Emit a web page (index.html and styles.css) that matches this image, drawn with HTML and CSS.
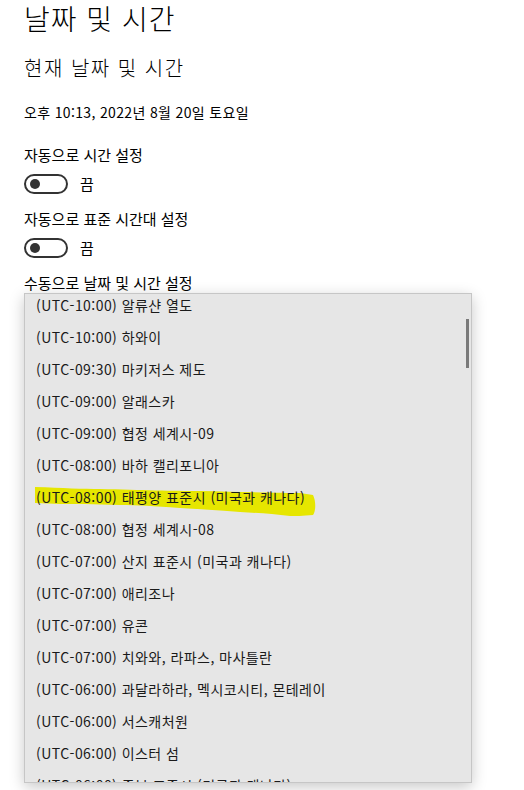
FILE: index.html
```html
<!DOCTYPE html>
<html lang="ko">
<head>
    <meta charset="UTF-8">
    <meta name="viewport" content="width=device-width, initial-scale=1.0">
    <title>날짜 및 시간</title>
    <link rel="stylesheet" href="styles.css">
</head>
<body>
    <main class="page">
        <h1>날짜 및 시간</h1>
        <h2>현재 날짜 및 시간</h2>
        <p class="now">오후 10:13, 2022년 8월 20일 토요일</p>

        <div class="setting">
            <div class="label">자동으로 시간 설정</div>
            <div class="switch-row">
                <span class="switch"><span class="knob"></span></span>
                <span>끔</span>
            </div>
        </div>

        <div class="setting">
            <div class="label">자동으로 표준 시간대 설정</div>
            <div class="switch-row">
                <span class="switch"><span class="knob"></span></span>
                <span>끔</span>
            </div>
        </div>

        <div class="setting">
            <div class="label">수동으로 날짜 및 시간 설정</div>
        </div>
    </main>

    <div class="dropdown">
        <ul class="zones">
            <li>(UTC-10:00) 알류샨 열도</li>
            <li>(UTC-10:00) 하와이</li>
            <li>(UTC-09:30) 마키저스 제도</li>
            <li>(UTC-09:00) 알래스카</li>
            <li>(UTC-09:00) 협정 세계시-09</li>
            <li>(UTC-08:00) 바하 캘리포니아</li>
            <li class="marked">
                <svg class="marker" width="290" height="36" viewBox="0 0 290 36">
                    <path d="M2 2 C30 3 50 4 67 4 C110 5 140 6 167 6 C210 7 250 8 267 8 L280 10 C283 16 283 26 280 30 C270 31 262 31 257 31 C240 29 225 28 207 27 C185 25 165 24 147 23 C120 21 105 20 87 20 C60 19 40 19 27 19 L2 18 Z" fill="#e6e600"/>
                </svg>
                <span>(UTC-08:00) 태평양 표준시 (미국과 캐나다)</span>
            </li>
            <li>(UTC-08:00) 협정 세계시-08</li>
            <li>(UTC-07:00) 산지 표준시 (미국과 캐나다)</li>
            <li>(UTC-07:00) 애리조나</li>
            <li>(UTC-07:00) 유콘</li>
            <li>(UTC-07:00) 치와와, 라파스, 마사틀란</li>
            <li>(UTC-06:00) 과달라하라, 멕시코시티, 몬테레이</li>
            <li>(UTC-06:00) 서스캐처원</li>
            <li>(UTC-06:00) 이스터 섬</li>
            <li>(UTC-06:00) 중부 표준시 (미국과 캐나다)</li>
        </ul>
        <div class="scrollbar"></div>
    </div>
</body>
</html>
```

FILE: styles.css
```css
* {
    margin: 0;
    padding: 0;
    box-sizing: border-box;
}

body {
    font-family: "Noto Sans CJK KR", "Noto Sans", sans-serif;
    background: #fff;
    color: #000;
    width: 524px;
    height: 790px;
    overflow: hidden;
    position: relative;
}

.page {
    padding-left: 24px;
}

h1 {
    font-size: 28px;
    font-weight: 300;
    line-height: 36px;
    letter-spacing: 1px;
}

h2 {
    font-size: 20px;
    font-weight: 300;
    line-height: 28px;
    margin-top: 18px;
    letter-spacing: 1.5px;
}

.now {
    font-size: 14px;
    line-height: 20px;
    margin-top: 20px;
    letter-spacing: 0.35px;
}

.setting {
    margin-top: 23px;
    font-size: 15px;
    line-height: 20px;
}

.setting + .setting {
    margin-top: 15px;
}

.switch-row {
    display: flex;
    align-items: center;
    gap: 12px;
    margin-top: 9px;
    height: 20px;
}

.switch {
    width: 44px;
    height: 20px;
    border: 2px solid #333;
    border-radius: 10px;
    display: flex;
    align-items: center;
    padding-left: 4px;
}

.knob {
    width: 10px;
    height: 10px;
    border-radius: 50%;
    background: #333;
}

.dropdown {
    position: absolute;
    left: 24px;
    top: 293px;
    width: 448px;
    height: 490px;
    background: #e6e6e6;
    border: 1px solid #c6c6c6;
    box-shadow: 0 4px 14px rgba(0, 0, 0, 0.22);
    overflow: hidden;
}

.zones {
    list-style: none;
    margin-top: -5px;
}

.zones li {
    height: 32px;
    line-height: 32px;
    font-size: 14px;
    color: #1a1a1a;
    padding-left: 11px;
    position: relative;
    letter-spacing: 0.45px;
}

.marker {
    position: absolute;
    left: 8px;
    top: 4px;
}

.marked span {
    position: relative;
}

.scrollbar {
    position: absolute;
    right: 2px;
    top: 25px;
    width: 3px;
    height: 49px;
    background: #7a7a7a;
}
```
